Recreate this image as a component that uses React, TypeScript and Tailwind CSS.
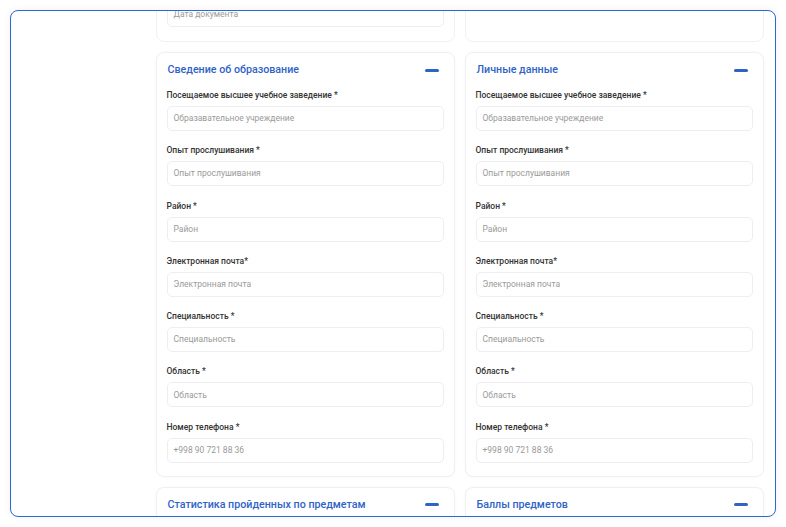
const fields = [
  { label: "Посещаемое высшее учебное заведение *", placeholder: "Образавательное учреждение" },
  { label: "Опыт прослушивания *", placeholder: "Опыт прослушивания" },
  { label: "Район *", placeholder: "Район" },
  { label: "Электронная почта*", placeholder: "Электронная почта" },
  { label: "Специальность *", placeholder: "Специальность" },
  { label: "Область *", placeholder: "Область" },
  { label: "Номер телефона *", placeholder: "+998 90 721 88 36" },
];

function Minus() {
  return <span className="block h-[3px] w-[14px] rounded-full bg-[#2f63c6]" />;
}

function Field({ label, placeholder }: { label: string; placeholder: string }) {
  return (
    <div className="flex flex-col">
      <div className="h-3 text-[8.5px] leading-3 font-medium text-[#333]">{label}</div>
      <div className="mt-[5px] flex h-[25px] items-center rounded-[5px] border border-[#eceef1] px-[6px] text-[8.5px] text-[#9a9a9a]">
        {placeholder}
      </div>
    </div>
  );
}

function FormCard({ title }: { title: string }) {
  return (
    <div className="rounded-[8px] border border-[#f0f0f0] bg-white px-[10px] pt-[8px] pb-[13px] shadow-[0_0_3px_rgba(0,0,0,0.03)]">
      <div className="flex h-[18px] items-center justify-between pl-[1px] pr-[5px]">
        <h2 className="text-[10.7px] font-medium text-[#2f63c6]">{title}</h2>
        <Minus />
      </div>
      <div className="mt-[10px] flex flex-col gap-[13.3px]">
        {fields.map((f) => (
          <Field key={f.label} {...f} />
        ))}
      </div>
    </div>
  );
}

function CollapsedCard({ title }: { title: string }) {
  return (
    <div className="h-[60px] rounded-[8px] border border-[#f0f0f0] bg-white px-[10px] pt-[8px] shadow-[0_0_3px_rgba(0,0,0,0.03)]">
      <div className="flex h-[18px] items-center justify-between pl-[1px] pr-[5px]">
        <h2 className="text-[10.7px] font-medium text-[#2f63c6]">{title}</h2>
        <Minus />
      </div>
    </div>
  );
}

export default function App() {
  return (
    <div className="h-[527px] w-[786px] bg-white pl-[10px] pt-[10px]" style={{ fontFamily: "Roboto, 'Noto Sans', sans-serif" }}>
      <div className="h-[507px] w-[766px] overflow-hidden rounded-[8px] border-[1.5px] border-[#2a68d4] bg-white shadow-[0_0_8px_rgba(0,0,0,0.06)]">
        <div className="-mt-[14px] grid grid-cols-[299px_299px] gap-x-[10px] gap-y-[10px] pl-[144.5px]">
          <div className="rounded-[8px] border border-[#f0f0f0] bg-white px-[10px] pt-[4px] pb-[14px]">
            <div className="flex h-[25px] items-center rounded-[5px] border border-[#eceef1] px-[6px] text-[8.5px] text-[#9a9a9a]">
              Дата документа
            </div>
          </div>
          <div className="rounded-[8px] border border-[#f0f0f0] bg-white" />
          <FormCard title="Сведение об образование" />
          <FormCard title="Личные данные" />
          <CollapsedCard title="Статистика пройденных по предметам" />
          <CollapsedCard title="Баллы предметов" />
        </div>
      </div>
    </div>
  );
}
